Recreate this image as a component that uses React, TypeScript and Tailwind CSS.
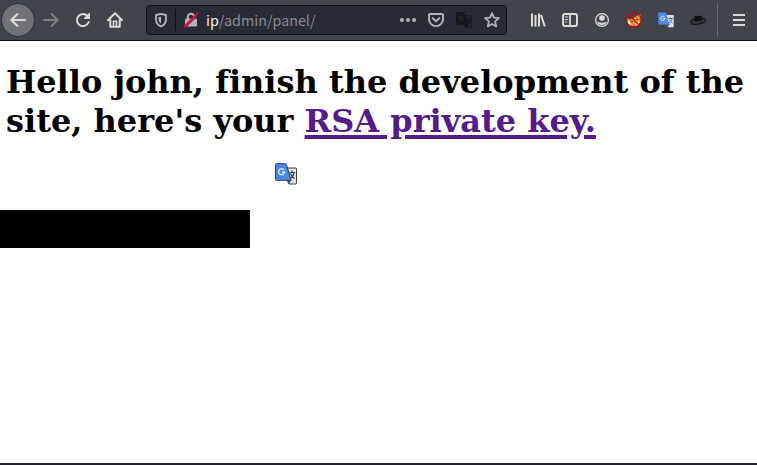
import React from "react";

type IconProps = { children: React.ReactNode; className?: string };

function Icon({ children, className = "w-8" }: IconProps) {
  return (
    <span className={`flex h-8 shrink-0 items-center justify-center ${className}`}>
      <svg width="16" height="16" viewBox="0 0 16 16" fill="none" stroke="currentColor" strokeWidth="2" strokeLinecap="round" strokeLinejoin="round">
        {children}
      </svg>
    </span>
  );
}

function TranslateArt({ size, dark = false }: { size: number; dark?: boolean }) {
  const edge = dark ? "#121318" : "#3b3b3d";
  return (
    <svg width={size} height={size} viewBox="0 0 22 22">
      <path d="M9 5h11.5q1 0 1 1v14q0 1-1 1H14z" fill={dark ? "#252730" : "#e4e4e4"} stroke={edge} />
      <path d="M14.5 9.5H20M17 7.8v1.7M19 10c-.5 2.5-2 4.5-4 5.5M15.5 10.5c.7 2 2 3.7 4 5" fill="none" stroke={edge} strokeWidth="1.2" />
      <path d="m12 17.5 4.5-.2-3 4z" fill={dark ? "#121318" : "#244fa8"} />
      <path d="M1.5.7h9q.7 0 1 .8L16 17.3H1.5q-1 0-1-1V1.7q0-1 1-1z" fill={dark ? "#15161b" : "#4a87ee"} stroke={edge} />
      <path d="M9 6.8A3 3 0 1 0 9.6 9H7" fill="none" stroke={dark ? "#393b43" : "#e8f1ff"} strokeWidth="1.3" />
    </svg>
  );
}

function AddressBar() {
  return (
    <div className="ml-[15px] flex h-[30px] w-[361px] items-center rounded-[4px] border border-[#0e0f13] bg-[#282a36] text-[#b4b4b7]">
      <Icon className="w-7">
        <path d="M8 1.9 13 3v4.3c0 3.4-1.8 5.9-5 7.1-3.2-1.2-5-3.7-5-7.1V3z" strokeWidth="1.8" />
        <path d="M8 4.7v6.8c-1.8-1.2-2.5-2.6-2.5-4.7V5.2z" fill="currentColor" stroke="none" />
      </Icon>
      <span className="h-[22px] w-px bg-[#0e0f13]" />
      <Icon className="w-[29px]">
        <path d="M4.8 7V4.9a3.2 3.2 0 0 1 6.4 0V7" />
        <rect x="2" y="6.5" width="12" height="8" rx="1.2" fill="currentColor" stroke="none" />
        <path d="M2.6 15.6 15.6 2.6" stroke="#282a36" strokeWidth="1" />
        <path d="M1.6 14.4 14.4 1.6" stroke="#ee0642" strokeWidth="2.1" />
      </Icon>
      <span className="ml-px flex-1 whitespace-pre font-['Noto_Sans_CJK_SC',sans-serif] text-[14.32px] leading-[28px] text-[#8b8c91]">
        <span className="text-[#f0f0ed]">ip</span>/admin/panel/
      </span>
      <Icon className="w-7">
        <g fill="currentColor" stroke="none">
          <circle cx="2" cy="8" r="2" />
          <circle cx="8" cy="8" r="2" />
          <circle cx="14" cy="8" r="2" />
        </g>
      </Icon>
      <Icon className="w-7">
        <path d="M2 2h12q1 0 1 1v4.3a7 6.8 0 0 1-14 0V3q0-1 1-1zM4.7 6.2 8 9.3l3.3-3.1" strokeWidth="1.9" />
      </Icon>
      <span className="flex w-7 justify-center">
        <TranslateArt size={16} dark />
      </span>
      <Icon className="w-7">
        <path d="m8 1.2 1.9 4.5 4.9.5-3.7 3.2 1.1 5L8 11.9l-4.2 2.5 1.1-5-3.7-3.2 4.9-.5z" strokeWidth="1.8" />
      </Icon>
    </div>
  );
}

function Toolbar() {
  return (
    <div className="flex h-[41px] shrink-0 items-start border-b border-[#0f1015] bg-[#42444c] pt-1 text-[#dbdbd8]">
      <span className="ml-[2px] rounded-full bg-[#717277] outline outline-1 outline-[#303138]">
        <Icon>
          <path d="M15 8H1.5M7.5 2 1.3 8l6.2 6" />
        </Icon>
      </span>
      <Icon className="ml-px w-8 text-[#7f8083]">
        <path d="M1 8h13.5M8.5 2l6.2 6-6.2 6" />
      </Icon>
      <Icon>
        <path d="M12.5 4.2A6 6 0 1 0 13.6 10" />
        <path d="M14.4 1.5v5H9.5z" fill="currentColor" strokeWidth="1.2" />
      </Icon>
      <Icon>
        <path d="M1 8.2 8 1.3l7 6.9M3.3 8v6.8h9.4V8" />
        <path d="M6.5 14V9.3h3V14" strokeWidth="1.6" />
      </Icon>
      <div className="flex h-8 items-center">
        <AddressBar />
      </div>
      <Icon className="ml-[15px] w-8">
        <path d="M2 1.5v13M5.5 3v11.5M9 1.5v13M11 3l3.8 11.5" strokeLinecap="butt" />
      </Icon>
      <Icon>
        <rect x="1" y="2" width="14" height="12" rx="2" />
        <path d="M8 2v12" strokeWidth="1.8" />
        <path d="M3.2 5h2.6M3.2 7.5h2.6M3.2 10h1.7" strokeWidth="1" />
      </Icon>
      <Icon>
        <circle cx="8" cy="8" r="6.4" strokeWidth="1.3" />
        <circle cx="8" cy="6" r="2.8" fill="currentColor" stroke="none" />
        <path d="M3.4 9.4q4.6 2.5 9.2 0C12.3 11.7 10.5 13 8 13s-4.3-1.3-4.6-3.6z" fill="currentColor" stroke="none" />
      </Icon>
      <Icon>
        <path d="M1 5.5 4 7.5 9 5l5.5-3.2.2 7.2-3.5 5H5L1.2 11z" fill="#e88e24" stroke="none" />
        <path d="m.8 7.2 3 2.3 1.7 4L2 11.8zm8 4.6 2.5-2.3 3 .3-2.5 3.4z" fill="#f6ead8" stroke="none" />
        <path d="M5.5 9.5h1M11 7.5h1" stroke="#57351e" strokeWidth="1.2" />
        <circle cx="8" cy="8" r="7.3" stroke="#c80505" strokeWidth="1.3" />
        <path d="m3 3 10 10" stroke="#c80505" strokeWidth="1.3" />
      </Icon>
      <span className="flex h-8 w-8 items-center justify-center">
        <svg width="16" height="16" viewBox="0 0 16 16">
          <path d="M7 3h8q.7 0 .7.7v10.8q0 .7-.7.7h-5z" fill="#e2e3e4" />
          <path d="M10.5 6.5h4.4M12.5 5v1.5M14 7c-.5 2-1.5 3.3-3.2 4.2M11.3 7.5c.7 1.7 1.7 2.8 3.2 3.5" fill="none" stroke="#616a72" />
          <path d="m8 12 4 .2L9.5 15z" fill="#2758b8" />
          <path d="M.9.5h7L11.5 12.5H1q-.7 0-.7-.7V1.2Q.3.5.9.5z" fill="#4b8bef" />
          <path d="M6.5 5A2.1 2.1 0 1 0 7 6.5H5.1" fill="none" stroke="#eef5ff" />
        </svg>
      </span>
      <Icon>
        <ellipse cx="8" cy="9.2" rx="7.4" ry="2.9" transform="rotate(-9 8 9)" fill="#34353a" stroke="#111215" strokeWidth="1" />
        <path d="M4 8.8 4.5 4.2q1.5-1 3.3-.2Q10 2.7 11.6 4.2L12.3 8Q8 10.5 4 8.8z" fill="#101114" stroke="none" />
      </Icon>
      <span className="-mt-px ml-[3px] h-[34px] w-px bg-[#68696e]" />
      <Icon className="ml-[5px] w-8">
        <path d="M2 3h12M2 8h12M2 13h12" strokeLinecap="butt" />
      </Icon>
    </div>
  );
}

export default function App() {
  return (
    <div className="flex h-[465px] w-[757px] flex-col overflow-hidden bg-white">
      <Toolbar />
      <main className="flex-1">
        <h1 className="ml-[6px] mt-[22px] whitespace-nowrap font-['DejaVu_Serif',serif] text-[32px] font-bold leading-[39px] text-black [font-variant-ligatures:none]">
          Hello john, finish the development of the
          <br />
          site, here's your{" "}
          <a className="text-[#551a8b] underline decoration-[4px] underline-offset-[3px]">RSA private key.</a>
        </h1>
        <div className="ml-[275px] mt-[22px] h-[22px] w-[22px]">
          <TranslateArt size={22} />
        </div>
        <div className="mt-[25px] h-[38px] w-[250px] bg-black" />
      </main>
      <div className="h-[2px] bg-[#20212c]" />
    </div>
  );
}
